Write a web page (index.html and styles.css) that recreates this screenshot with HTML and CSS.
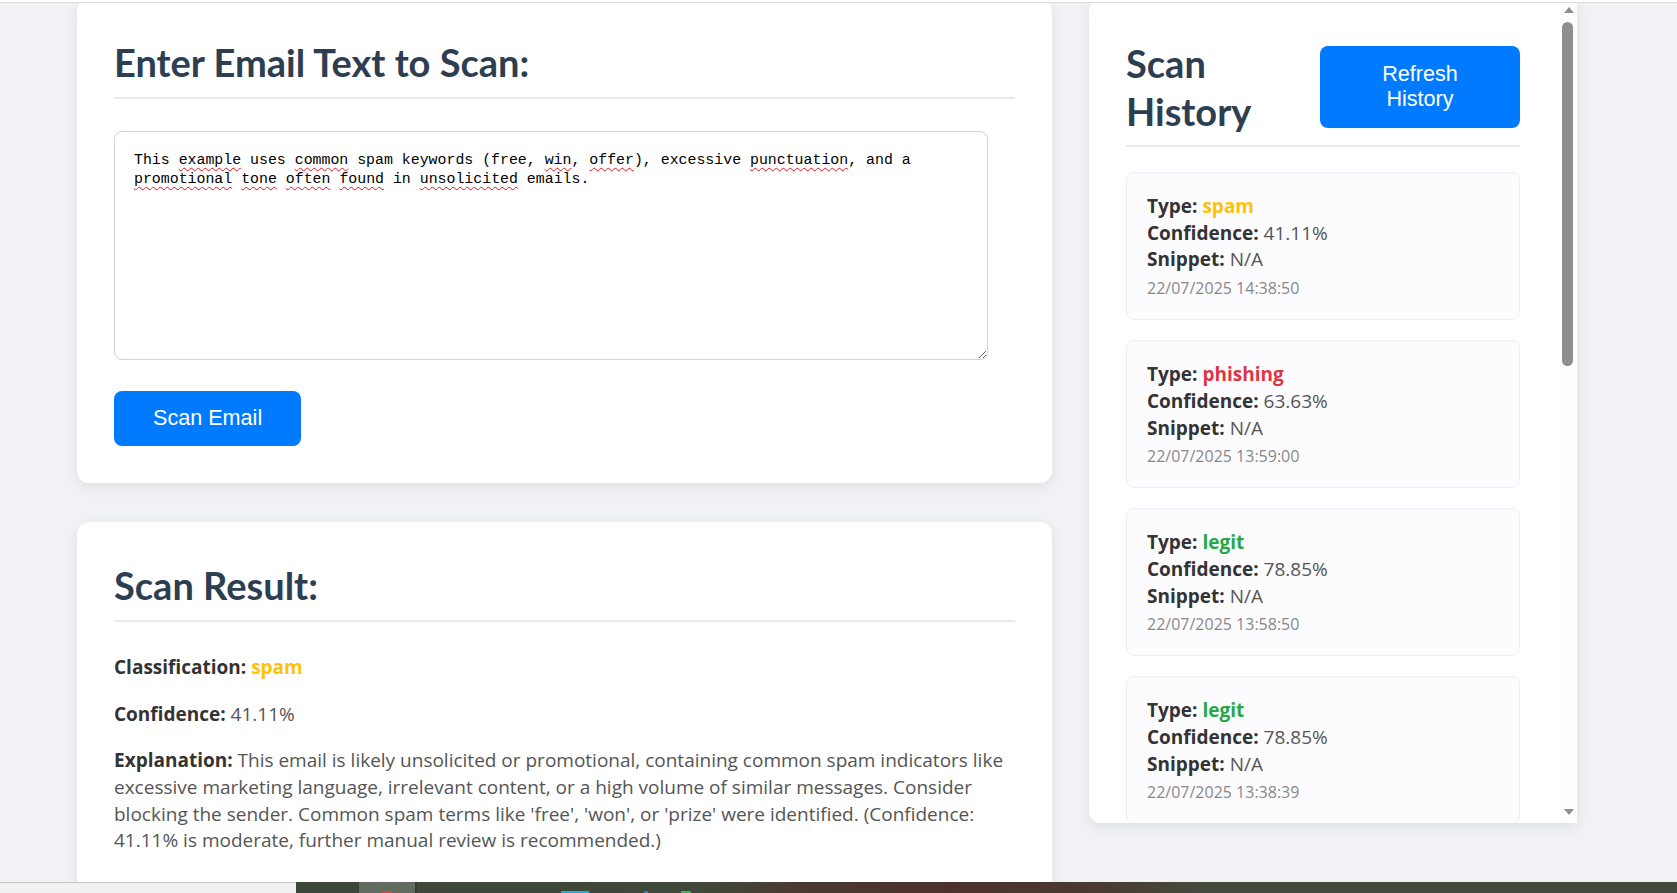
FILE: index.html
```html
<!DOCTYPE html>
<html lang="en">
<head>
<meta charset="utf-8">
<title>Email Scanner</title>
<link rel="stylesheet" href="styles.css">
</head>
<body>
<div class="topbar"></div>
<main class="layout">
  <div class="main-col">
    <section class="card">
      <h2 class="section-title">Enter Email Text to Scan:</h2>
      <div class="email-input" contenteditable="true" role="textbox" aria-multiline="true" spellcheck="false">This <span class="typo">example</span> uses <span class="typo">common</span> spam keywords (free, <span class="typo">win</span>, <span class="typo">offer</span>), excessive <span class="typo">punctuation</span>, and a <span class="typo">promotional</span> <span class="typo">tone</span> <span class="typo">often</span> <span class="typo">found</span> in <span class="typo">unsolicited</span> emails.</div>
      <button class="btn btn-scan" type="button">Scan Email</button>
    </section>
    <section class="card result-card">
      <h2 class="section-title">Scan Result:</h2>
      <p><strong>Classification:</strong> <span class="kind kind-spam">spam</span></p>
      <p><strong>Confidence:</strong> 41.11%</p>
      <p><strong>Explanation:</strong> This email is likely unsolicited or promotional, containing common spam indicators like excessive marketing language, irrelevant content, or a high volume of similar messages. Consider blocking the sender. Common spam terms like 'free', 'won', or 'prize' were identified. (Confidence: 41.11% is moderate, further manual review is recommended.)</p>
    </section>
  </div>
  <aside class="card history-card">
    <div class="history-scroll">
      <div class="history-header">
        <h2 class="history-title">Scan History</h2>
        <button class="btn btn-refresh" type="button">Refresh History</button>
      </div>
      <div class="history-list">
        <div class="history-item">
          <p><strong>Type:</strong> <span class="kind kind-spam">spam</span></p>
          <p><strong>Confidence:</strong> 41.11%</p>
          <p><strong>Snippet:</strong> N/A</p>
          <p class="date">22/07/2025 14:38:50</p>
        </div>
        <div class="history-item">
          <p><strong>Type:</strong> <span class="kind kind-phishing">phishing</span></p>
          <p><strong>Confidence:</strong> 63.63%</p>
          <p><strong>Snippet:</strong> N/A</p>
          <p class="date">22/07/2025 13:59:00</p>
        </div>
        <div class="history-item">
          <p><strong>Type:</strong> <span class="kind kind-legit">legit</span></p>
          <p><strong>Confidence:</strong> 78.85%</p>
          <p><strong>Snippet:</strong> N/A</p>
          <p class="date">22/07/2025 13:58:50</p>
        </div>
        <div class="history-item">
          <p><strong>Type:</strong> <span class="kind kind-legit">legit</span></p>
          <p><strong>Confidence:</strong> 78.85%</p>
          <p><strong>Snippet:</strong> N/A</p>
          <p class="date">22/07/2025 13:38:39</p>
        </div>
        <div class="history-item">
          <p><strong>Type:</strong> <span class="kind kind-phishing">phishing</span></p>
          <p><strong>Confidence:</strong> 71.20%</p>
          <p><strong>Snippet:</strong> N/A</p>
          <p class="date">22/07/2025 13:30:12</p>
        </div>
      </div>
    </div>
    <div class="scrollbar" aria-hidden="true">
      <span class="sb-btn sb-btn-up"><i class="sb-arrow sb-arrow-up"></i></span>
      <span class="sb-track"><i class="sb-thumb"></i></span>
      <span class="sb-btn sb-btn-down"><i class="sb-arrow sb-arrow-down"></i></span>
    </div>
  </aside>
</main>
<div class="taskbar">
  <div class="taskbar-status"></div>
  <div class="taskbar-apps">
    <span class="tb-active"><i class="tb-icon tb-red"></i></span>
    <i class="tb-icon tb-cyan"></i>
    <i class="tb-icon tb-blue"></i>
    <i class="tb-icon tb-green"></i>
  </div>
</div>
</body>
</html>
```
FILE: styles.css
```css
* { box-sizing: border-box; }

html, body {
  height: 100%;
  overflow: hidden;
}

body {
  margin: 0;
  background: #f0f2f5;
  font-family: "Open Sans", "Noto Sans", sans-serif;
  font-size: 19px;
  line-height: 26.7px;
  color: #555;
}

.topbar {
  position: fixed;
  top: 0;
  left: 0;
  right: 0;
  height: 3px;
  background: #fff;
  border-bottom: 1px solid #dcdcdc;
  z-index: 5;
}

.layout {
  display: grid;
  grid-template-columns: 975px 488px;
  column-gap: 37px;
  align-items: start;
  margin: -1px 0 0 77px;
}

.main-col {
  display: flex;
  flex-direction: column;
  gap: 39px;
}

.card {
  background: #fff;
  border-radius: 12px;
  padding: 37px;
  box-shadow: 0 4px 14px rgba(0, 0, 0, 0.08);
}

.section-title,
.history-title {
  margin: 0;
  font-family: Lato, "Open Sans", sans-serif;
  font-size: 38px;
  line-height: 48px;
  font-weight: 700;
  color: #2c3e50;
}

.section-title {
  margin-bottom: 32px;
  padding: 2px 0 11px;
  border-bottom: 2px solid #e9ecef;
}

.email-input {
  width: 97%;
  height: 229px;
  margin-bottom: 31px;
  padding: 19px;
  border: 1px solid #ced4da;
  border-radius: 8px;
  font-family: "Liberation Mono", monospace;
  font-size: 14.88px;
  line-height: 19px;
  color: #000;
  white-space: pre-wrap;
  overflow: auto;
  resize: vertical;
  outline: none;
}

.typo {
  text-decoration: underline wavy #e81123;
  text-decoration-thickness: 1px;
  text-underline-offset: 3px;
}

.btn {
  display: block;
  border: 0;
  border-radius: 8px;
  background: #007bff;
  color: #fff;
  font-family: "Liberation Sans", Arial, sans-serif;
  font-size: 21.6px;
  line-height: 24.8px;
  cursor: pointer;
}

.btn-scan {
  padding: 15px 39px;
}

.result-card p {
  margin: 0 0 20px;
}

strong {
  color: #333;
  font-weight: 700;
}

.kind { font-weight: 700; }
.kind-spam { color: #ffc107; }
.kind-phishing { color: #dc3545; }
.kind-legit { color: #28a745; }

/* history */
.history-card {
  display: flex;
  height: 824px;
  padding: 0;
  overflow: hidden;
  border-radius: 12px 0 0 12px;
}

.history-scroll {
  flex: 1;
  min-width: 0;
  overflow: hidden;
  padding: 37px 40px 37px 37px;
}

.history-header {
  display: flex;
  align-items: center;
  justify-content: space-between;
  margin-bottom: 25px;
  padding: 3px 0 10px;
  border-bottom: 2px solid #e9ecef;
}

.history-title { flex: 1; }

.btn-refresh {
  flex: 0 0 200px;
  padding: 16px 40px;
}

.history-list {
  display: flex;
  flex-direction: column;
  gap: 20px;
}

.history-item {
  padding: 20px;
  background: #fcfcfe;
  border: 1px solid #eceef1;
  border-radius: 8px;
}

.history-item p { margin: 0; }

.history-item .date {
  margin-top: 4px;
  font-size: 16px;
  line-height: 22px;
  color: #888;
}

/* scrollbar of the history panel */
.scrollbar {
  flex: 0 0 17px;
  display: flex;
  flex-direction: column;
  background: #fdfdfd;
}

.sb-btn {
  display: flex;
  justify-content: center;
  height: 20px;
}

.sb-btn-up { padding-top: 8px; }
.sb-btn-down { padding-top: 6px; }

.sb-arrow {
  display: block;
  width: 0;
  height: 0;
  border-left: 5px solid transparent;
  border-right: 5px solid transparent;
}

.sb-arrow-up { border-bottom: 6px solid #8f8f8f; }
.sb-arrow-down { border-top: 6px solid #8f8f8f; }

.sb-track {
  flex: 1;
  padding: 3px 4px 0 2px;
}

.sb-thumb {
  display: block;
  height: 344px;
  border-radius: 6px;
  background: #8f8f8f;
}

/* taskbar */
.taskbar {
  position: fixed;
  left: 0;
  right: 0;
  bottom: 0;
  height: 11px;
  display: flex;
  z-index: 10;
}

.taskbar-status {
  flex: 0 0 296px;
  background: #f1f1f1;
  border-top: 1px solid #c6c6c6;
}

.taskbar-apps {
  flex: 1;
  display: flex;
  align-items: flex-end;
  background: linear-gradient(90deg, #3d4738 0px, #404939 400px, #4a3a31 500px, #4c302c 650px, #4a3a31 800px, #434a3b 900px, #434a3b 1381px);
}

.tb-active {
  display: flex;
  align-items: flex-end;
  justify-content: center;
  width: 58px;
  height: 100%;
  margin-left: 63px;
  background: #626b60;
  border-right: 2px solid #333b31;
}

.tb-icon {
  display: block;
  height: 2px;
}

.tb-red { width: 10px; background: #e0433a; }
.tb-cyan { width: 28px; margin-left: 144px; background: #12b2ee; }
.tb-blue { width: 4px; margin-left: 55px; background: #2f7fe0; }
.tb-green { width: 10px; margin-left: 33px; background: #2fbf5b; }
```
